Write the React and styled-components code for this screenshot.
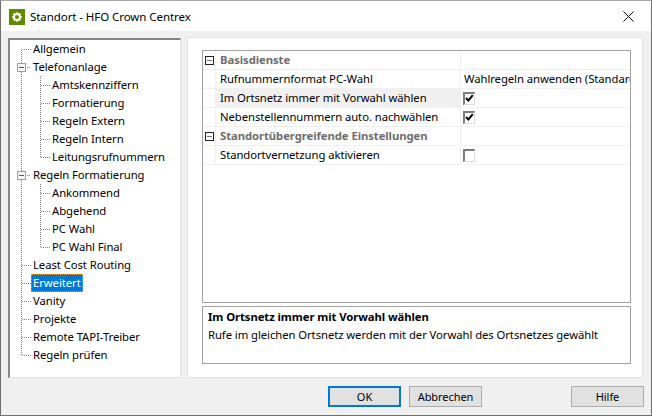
import React from "react";
import styled, { createGlobalStyle } from "styled-components";

const Global = createGlobalStyle`
  html, body { margin: 0; padding: 0; background: #f0f0f0; }
  * { box-sizing: border-box; }
`;

const Dialog = styled.div`
  width: 652px; height: 416px; display: flex; flex-direction: column;
  background: #f0f0f0; border: 1px solid #6e6e6e; border-top-color: #a8a8a8;
  font-family: "Noto Sans", "Open Sans", sans-serif; font-size: 11.3px; letter-spacing: -0.07px; color: #000; overflow: hidden;
`;
const TitleBar = styled.header`
  height: 30px; background: #fff; display: flex; align-items: center; padding-left: 8px; flex: none;
`;
const AppIcon = styled.span`
  width: 16px; height: 16px; background: #5f8a00; display: flex; align-items: center; justify-content: center; margin-right: 5px; margin-top: 1px;
`;
const TitleText = styled.span`font-size: 11.5px; flex: 1; margin-top: 1px;`;
const CloseButton = styled.button`
  width: 46px; height: 30px; border: 0; background: transparent; display: flex; align-items: center; justify-content: center; padding: 0;
`;
const Main = styled.main`
  flex: none; height: 347px; display: flex; gap: 6px; padding: 6px 8px 0 7px;
`;
const TreePanel = styled.nav`
  width: 173px; margin-top: 1px; background: #fff; padding: 0 0 0 2px;
  border-style: solid; border-width: 2px 1px 1px 2px; border-color: #858585 #e0e0e0 #e0e0e0 #858585;
`;
const TreeRowBox = styled.div`height: 18px; display: flex; align-items: center;`;
const TreeLabel = styled.span`
  height: 18px; line-height: 16px; padding: 0 1px; white-space: nowrap;
  border: 1px ${p => (p.$selected ? "dotted #f09a30" : "solid transparent")};
  background: ${p => (p.$selected ? "#0078d7" : "transparent")};
  color: ${p => (p.$selected ? "#fff" : "#000")};
`;
const Content = styled.section`
  flex: 1; background: #fff; border: 1px solid #e3e3e3; padding: 12px 11px 14px 14px; display: flex; flex-direction: column; gap: 3px;
`;
const Grid = styled.div`
  height: 253px; flex: none; border: 1px solid #a0a0a0; background: #fff; overflow: hidden;
`;
const GridRow = styled.div`
  height: 19px; display: grid; grid-template-columns: 13px 245px 1fr; border-bottom: 1px solid #f0f0f0;
`;
const Gutter = styled.div`
  display: flex; align-items: center; justify-content: center; border-right: 1px solid #f0f0f0;
`;
const NameCell = styled.div`
  padding-left: 4px; line-height: 18px; white-space: nowrap; border-right: 1px solid #f0f0f0;
  background: ${p => (p.$selected ? "#f0f0f0" : "#fff")};
  font-weight: ${p => (p.$group ? 700 : 400)};
  color: ${p => (p.$group ? "#6d6d6d" : "#000")};
`;
const ValueCell = styled.div`
  padding-left: 3px; line-height: 18px; white-space: nowrap; overflow: hidden; display: flex; align-items: center;
`;
const CheckBox = styled.span`
  width: 12px; height: 13px; margin-left: -1px; display: flex; align-items: center; justify-content: center; background: #fff;
  border-style: solid; border-width: 2px 1px 1px 2px; border-color: #7c7c7c #dcdcdc #dcdcdc #7c7c7c;
`;
const Description = styled.div`
  height: 58px; flex: none; border: 1px solid #a0a0a0; background: #fff; padding: 1px 5px;
`;
const DescTitle = styled.div`font-weight: 700; line-height: 18px;`;
const DescBody = styled.div`line-height: 18px;`;
const Footer = styled.footer`
  flex: 1; display: flex; align-items: flex-start; padding: 8px 7px 0 327px; gap: 8px;
`;
const Button = styled.button`
  width: 73px; height: 21px; background: #e1e1e1; color: #000; padding: 0;
  font: inherit; font-size: 11px; letter-spacing: inherit; line-height: 1;
  border: ${p => (p.$primary ? "2px solid #0078d7" : "1px solid #adadad")};
  margin-left: ${p => (p.$push ? "auto" : "0")};
`;

const Guide = ({ kind }) => (
  <svg width="19" height="18" viewBox="0 0 19 18" shapeRendering="crispEdges" style={{ flex: "none" }}>
    <g stroke="#808080" strokeDasharray="1 1" fill="none">
      {(kind === "pipe" || kind === "tee") && <line x1="9.5" y1="0" x2="9.5" y2="18" />}
      {kind === "first" && <line x1="9.5" y1="10" x2="9.5" y2="18" />}
      {kind === "last" && <line x1="9.5" y1="0" x2="9.5" y2="10" />}
      {kind !== "pipe" && kind !== "none" && kind !== "box" && <line x1="10" y1="9.5" x2="19" y2="9.5" />}
    </g>
    {kind === "box" && (
      <g>
        <line x1="9.5" y1="0" x2="9.5" y2="18" stroke="#808080" strokeDasharray="1 1" />
        <line x1="15" y1="9.5" x2="19" y2="9.5" stroke="#808080" strokeDasharray="1 1" />
        <rect x="5.5" y="5.5" width="8" height="8" fill="#f4f4f4" stroke="#a0a0a0" />
        <line x1="7" y1="9.5" x2="12" y2="9.5" stroke="#2f5fb0" />
      </g>
    )}
  </svg>
);

const tree = [
  [["first"], "Allgemein"],
  [["box"], "Telefonanlage"],
  [["pipe", "tee"], "Amtskennziffern"],
  [["pipe", "tee"], "Formatierung"],
  [["pipe", "tee"], "Regeln Extern"],
  [["pipe", "tee"], "Regeln Intern"],
  [["pipe", "last"], "Leitungsrufnummern"],
  [["box"], "Regeln Formatierung"],
  [["pipe", "tee"], "Ankommend"],
  [["pipe", "tee"], "Abgehend"],
  [["pipe", "tee"], "PC Wahl"],
  [["pipe", "last"], "PC Wahl Final"],
  [["tee"], "Least Cost Routing"],
  [["tee"], "Erweitert", true],
  [["tee"], "Vanity"],
  [["tee"], "Projekte"],
  [["tee"], "Remote TAPI-Treiber"],
  [["last"], "Regeln prüfen"],
];

const Minus = () => (
  <svg width="9" height="9" viewBox="0 0 9 9" shapeRendering="crispEdges">
    <rect x="0.5" y="0.5" width="8" height="8" fill="#fff" stroke="#222" />
    <line x1="2" y1="4.5" x2="7" y2="4.5" stroke="#777" />
  </svg>
);
const Tick = () => (
  <svg width="9" height="9" viewBox="0 0 9 9">
    <path d="M1 4 L3.4 6.4 L7.8 1.2" fill="none" stroke="#000" strokeWidth="2" />
  </svg>
);

const rows = [
  { name: "Basisdienste", group: true },
  { name: "Rufnummernformat PC-Wahl", value: "Wahlregeln anwenden (Standard)" },
  { name: "Im Ortsnetz immer mit Vorwahl wählen", check: true, selected: true },
  { name: "Nebenstellennummern auto. nachwählen", check: true },
  { name: "Standortübergreifende Einstellungen", group: true },
  { name: "Standortvernetzung aktivieren", check: false },
];

export default function App() {
  return (
    <>
      <Global />
      <Dialog>
        <TitleBar>
          <AppIcon>
            <svg width="10" height="10" viewBox="0 0 10 10">
              <circle cx="5" cy="5" r="3" fill="none" stroke="#fff" strokeWidth="2" />
              <path d="M5 0v2M5 8v2M0 5h2M8 5h2M1.5 1.5l1.2 1.2M7.3 7.3l1.2 1.2M8.5 1.5L7.3 2.7M2.7 7.3L1.5 8.5" stroke="#fff" strokeWidth="1.3" />
            </svg>
          </AppIcon>
          <TitleText>Standort - HFO Crown Centrex</TitleText>
          <CloseButton aria-label="Schließen">
            <svg width="11" height="11" viewBox="0 0 11 11">
              <path d="M0.5 0.5 L10.5 10.5 M10.5 0.5 L0.5 10.5" stroke="#000" strokeWidth="1" />
            </svg>
          </CloseButton>
        </TitleBar>
        <Main>
          <TreePanel>
            {tree.map(([guides, label, selected]) => (
              <TreeRowBox key={label}>
                {guides.map((k, i) => <Guide key={i} kind={k} />)}
                <TreeLabel $selected={selected}>{label}</TreeLabel>
              </TreeRowBox>
            ))}
          </TreePanel>
          <Content>
            <Grid>
              {rows.map(r => (
                <GridRow key={r.name}>
                  <Gutter>{r.group && <Minus />}</Gutter>
                  <NameCell $group={r.group} $selected={r.selected}>{r.name}</NameCell>
                  <ValueCell>
                    {r.value}
                    {r.check !== undefined && <CheckBox>{r.check && <Tick />}</CheckBox>}
                  </ValueCell>
                </GridRow>
              ))}
            </Grid>
            <Description>
              <DescTitle>Im Ortsnetz immer mit Vorwahl wählen</DescTitle>
              <DescBody>Rufe im gleichen Ortsnetz werden mit der Vorwahl des Ortsnetzes gewählt</DescBody>
            </Description>
          </Content>
        </Main>
        <Footer>
          <Button $primary>OK</Button>
          <Button>Abbrechen</Button>
          <Button $push>Hilfe</Button>
        </Footer>
      </Dialog>
    </>
  );
}
